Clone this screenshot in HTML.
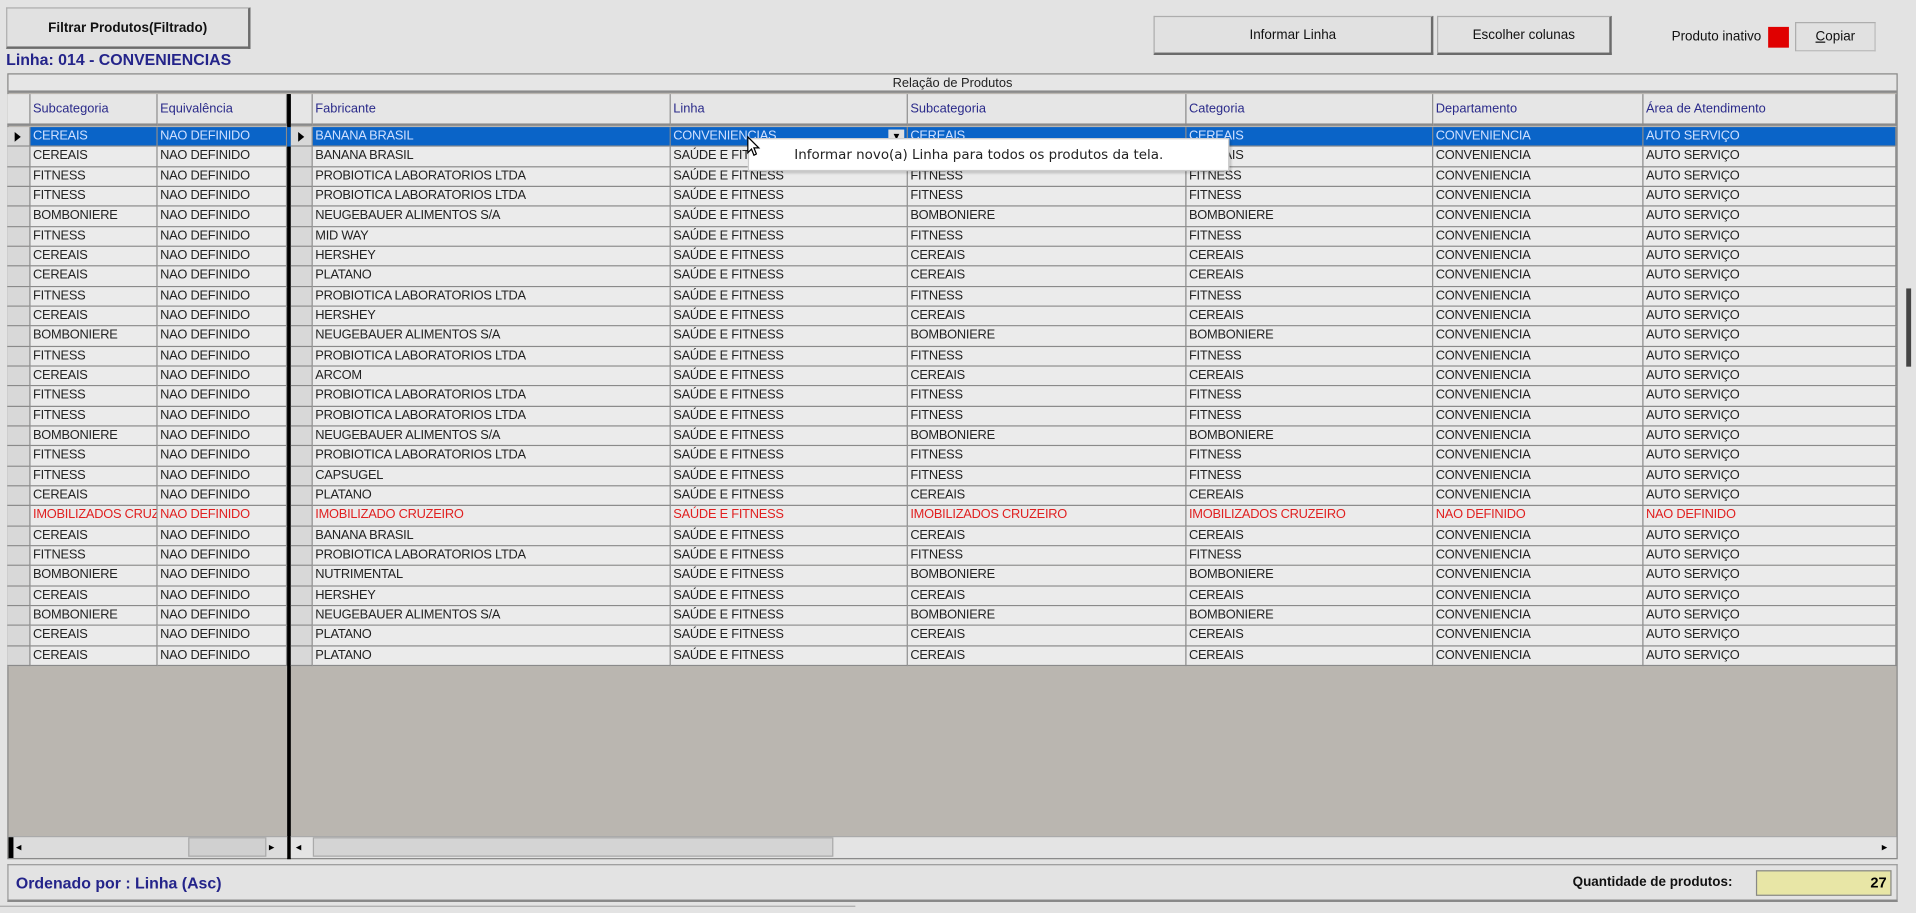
<!DOCTYPE html>
<html><head><meta charset="utf-8"><style>
*{box-sizing:border-box;margin:0;padding:0}
html,body{width:1916px;height:913px;overflow:hidden;background:#e3e3e3}
#w{position:absolute;left:0;top:0;width:1568px;height:747px;transform:scale(1.22194,1.2222);transform-origin:0 0;font-family:"Liberation Sans",Arial,sans-serif;background:#e3e3e3}
.a{position:absolute}
.btn{position:absolute;background:#e1e1e1;border:1px solid #adadad;border-right:2px solid #6b6b6b;border-bottom:2px solid #6b6b6b;font-size:11px;display:flex;align-items:center;justify-content:center;color:#111}
.row{position:absolute;left:6px;height:16.33px;display:flex;font-size:10.5px;color:#222;letter-spacing:-0.2px}
.row div{height:16.33px;line-height:15px;border-right:1px solid #8a8a8a;border-bottom:1px solid #8a8a8a;background:#ebebeb;padding-left:2px;white-space:nowrap;overflow:hidden}
.row .i{width:19px;background:#d8d8d8;padding:0}
.row .i2{width:18px;background:#d8d8d8;padding:0}
.row .d{width:3px;background:#000;border:none;padding:0}
.c1{width:104px}.c2{width:106px}.c3{width:293px}.c4{width:194px}.c5{width:228px}.c6{width:202px}.c7{width:172px}.c8{width:207px}
.row.s div{background:#0a64c8;color:#cfe0ff}
.row.s .i,.row.s .i2{background:#d8d8d8;color:#000}
.row.r div{color:#e02020}
.hd{position:absolute;left:6px;top:77px;height:26px;display:flex;font-size:10.5px;color:#2a2a8a}
.hd div{height:26px;line-height:24px;border-right:1px solid #8a8a8a;border-bottom:2px solid #8a8a8a;background:#e6e6e6;padding-left:2px}
.hd .i{width:19px;padding:0}.hd .i2{width:18px;padding:0}.hd .d{width:3px;background:#000;border:none;padding:0}
.tri{display:inline-block;width:0;height:0;border-top:4px solid transparent;border-bottom:4px solid transparent;border-left:5px solid #000;margin:4px 0 0 6px}
</style></head><body><div id="w">
<div class="btn" style="left:5px;top:6px;width:200px;height:34px;font-weight:bold">Filtrar Produtos(Filtrado)</div>
<div class="a" style="left:5px;top:41px;font-size:13px;font-weight:bold;color:#24248a">Linha: 014 - CONVENIENCIAS</div>
<div class="btn" style="left:944px;top:13px;width:229px;height:32px">Informar Linha</div>
<div class="btn" style="left:1176px;top:13px;width:143px;height:32px">Escolher colunas</div>
<div class="a" style="left:1368px;top:24px;font-size:11px;color:#111">Produto inativo</div>
<div class="a" style="left:1447px;top:22px;width:17px;height:17px;background:#e00000"></div>
<div class="btn" style="left:1469px;top:18px;width:66px;height:24px;border-right:1px solid #bbb;border-bottom:1px solid #bbb"><u>C</u>opiar</div>
<div class="a" style="left:6px;top:60px;width:1547px;height:643px;background:#bab6b0;border:1px solid #8a8a8a"></div>
<div class="a" style="left:7px;top:61px;width:1545px;height:15px;background:#e6e6e6;border-bottom:2px solid #8a8a8a;font-size:10.5px;text-align:center;line-height:14px;color:#222">Relação de Produtos</div>
<div class="hd"><div class="i"></div><div class="c1">Subcategoria</div><div class="c2">Equivalência</div><div class="d"></div><div class="i2"></div><div class="c3">Fabricante</div><div class="c4">Linha</div><div class="c5">Subcategoria</div><div class="c6">Categoria</div><div class="c7">Departamento</div><div class="c8">Área de Atendimento</div></div>
<div class="a" style="left:235px;top:77px;width:3px;height:626px;background:#000"></div>
<div class="row s" style="top:104px"><div class="i"><span class="tri"></span></div><div class="c1">CEREAIS</div><div class="c2">NAO DEFINIDO</div><div class="d"></div><div class="i2"><span class="tri"></span></div><div class="c3">BANANA BRASIL</div><div class="c4" style="position:relative">CONVENIENCIAS<span style="position:absolute;right:2px;top:2px;width:13px;height:12px;background:#e0e0e0;color:#000;font-size:8px;text-align:center;line-height:12px">▼</span></div><div class="c5">CEREAIS</div><div class="c6">CEREAIS</div><div class="c7">CONVENIENCIA</div><div class="c8">AUTO SERVIÇO</div></div>
<div class="row" style="top:120.33px"><div class="i"></div><div class="c1">CEREAIS</div><div class="c2">NAO DEFINIDO</div><div class="d"></div><div class="i2"></div><div class="c3">BANANA BRASIL</div><div class="c4">SAÚDE E FITNESS</div><div class="c5">CEREAIS</div><div class="c6">CEREAIS</div><div class="c7">CONVENIENCIA</div><div class="c8">AUTO SERVIÇO</div></div>
<div class="row" style="top:136.67px"><div class="i"></div><div class="c1">FITNESS</div><div class="c2">NAO DEFINIDO</div><div class="d"></div><div class="i2"></div><div class="c3">PROBIOTICA LABORATORIOS LTDA</div><div class="c4">SAÚDE E FITNESS</div><div class="c5">FITNESS</div><div class="c6">FITNESS</div><div class="c7">CONVENIENCIA</div><div class="c8">AUTO SERVIÇO</div></div>
<div class="row" style="top:153px"><div class="i"></div><div class="c1">FITNESS</div><div class="c2">NAO DEFINIDO</div><div class="d"></div><div class="i2"></div><div class="c3">PROBIOTICA LABORATORIOS LTDA</div><div class="c4">SAÚDE E FITNESS</div><div class="c5">FITNESS</div><div class="c6">FITNESS</div><div class="c7">CONVENIENCIA</div><div class="c8">AUTO SERVIÇO</div></div>
<div class="row" style="top:169.33px"><div class="i"></div><div class="c1">BOMBONIERE</div><div class="c2">NAO DEFINIDO</div><div class="d"></div><div class="i2"></div><div class="c3">NEUGEBAUER ALIMENTOS S/A</div><div class="c4">SAÚDE E FITNESS</div><div class="c5">BOMBONIERE</div><div class="c6">BOMBONIERE</div><div class="c7">CONVENIENCIA</div><div class="c8">AUTO SERVIÇO</div></div>
<div class="row" style="top:185.67px"><div class="i"></div><div class="c1">FITNESS</div><div class="c2">NAO DEFINIDO</div><div class="d"></div><div class="i2"></div><div class="c3">MID WAY</div><div class="c4">SAÚDE E FITNESS</div><div class="c5">FITNESS</div><div class="c6">FITNESS</div><div class="c7">CONVENIENCIA</div><div class="c8">AUTO SERVIÇO</div></div>
<div class="row" style="top:202px"><div class="i"></div><div class="c1">CEREAIS</div><div class="c2">NAO DEFINIDO</div><div class="d"></div><div class="i2"></div><div class="c3">HERSHEY</div><div class="c4">SAÚDE E FITNESS</div><div class="c5">CEREAIS</div><div class="c6">CEREAIS</div><div class="c7">CONVENIENCIA</div><div class="c8">AUTO SERVIÇO</div></div>
<div class="row" style="top:218.33px"><div class="i"></div><div class="c1">CEREAIS</div><div class="c2">NAO DEFINIDO</div><div class="d"></div><div class="i2"></div><div class="c3">PLATANO</div><div class="c4">SAÚDE E FITNESS</div><div class="c5">CEREAIS</div><div class="c6">CEREAIS</div><div class="c7">CONVENIENCIA</div><div class="c8">AUTO SERVIÇO</div></div>
<div class="row" style="top:234.67px"><div class="i"></div><div class="c1">FITNESS</div><div class="c2">NAO DEFINIDO</div><div class="d"></div><div class="i2"></div><div class="c3">PROBIOTICA LABORATORIOS LTDA</div><div class="c4">SAÚDE E FITNESS</div><div class="c5">FITNESS</div><div class="c6">FITNESS</div><div class="c7">CONVENIENCIA</div><div class="c8">AUTO SERVIÇO</div></div>
<div class="row" style="top:251px"><div class="i"></div><div class="c1">CEREAIS</div><div class="c2">NAO DEFINIDO</div><div class="d"></div><div class="i2"></div><div class="c3">HERSHEY</div><div class="c4">SAÚDE E FITNESS</div><div class="c5">CEREAIS</div><div class="c6">CEREAIS</div><div class="c7">CONVENIENCIA</div><div class="c8">AUTO SERVIÇO</div></div>
<div class="row" style="top:267.33px"><div class="i"></div><div class="c1">BOMBONIERE</div><div class="c2">NAO DEFINIDO</div><div class="d"></div><div class="i2"></div><div class="c3">NEUGEBAUER ALIMENTOS S/A</div><div class="c4">SAÚDE E FITNESS</div><div class="c5">BOMBONIERE</div><div class="c6">BOMBONIERE</div><div class="c7">CONVENIENCIA</div><div class="c8">AUTO SERVIÇO</div></div>
<div class="row" style="top:283.67px"><div class="i"></div><div class="c1">FITNESS</div><div class="c2">NAO DEFINIDO</div><div class="d"></div><div class="i2"></div><div class="c3">PROBIOTICA LABORATORIOS LTDA</div><div class="c4">SAÚDE E FITNESS</div><div class="c5">FITNESS</div><div class="c6">FITNESS</div><div class="c7">CONVENIENCIA</div><div class="c8">AUTO SERVIÇO</div></div>
<div class="row" style="top:300px"><div class="i"></div><div class="c1">CEREAIS</div><div class="c2">NAO DEFINIDO</div><div class="d"></div><div class="i2"></div><div class="c3">ARCOM</div><div class="c4">SAÚDE E FITNESS</div><div class="c5">CEREAIS</div><div class="c6">CEREAIS</div><div class="c7">CONVENIENCIA</div><div class="c8">AUTO SERVIÇO</div></div>
<div class="row" style="top:316.33px"><div class="i"></div><div class="c1">FITNESS</div><div class="c2">NAO DEFINIDO</div><div class="d"></div><div class="i2"></div><div class="c3">PROBIOTICA LABORATORIOS LTDA</div><div class="c4">SAÚDE E FITNESS</div><div class="c5">FITNESS</div><div class="c6">FITNESS</div><div class="c7">CONVENIENCIA</div><div class="c8">AUTO SERVIÇO</div></div>
<div class="row" style="top:332.67px"><div class="i"></div><div class="c1">FITNESS</div><div class="c2">NAO DEFINIDO</div><div class="d"></div><div class="i2"></div><div class="c3">PROBIOTICA LABORATORIOS LTDA</div><div class="c4">SAÚDE E FITNESS</div><div class="c5">FITNESS</div><div class="c6">FITNESS</div><div class="c7">CONVENIENCIA</div><div class="c8">AUTO SERVIÇO</div></div>
<div class="row" style="top:349px"><div class="i"></div><div class="c1">BOMBONIERE</div><div class="c2">NAO DEFINIDO</div><div class="d"></div><div class="i2"></div><div class="c3">NEUGEBAUER ALIMENTOS S/A</div><div class="c4">SAÚDE E FITNESS</div><div class="c5">BOMBONIERE</div><div class="c6">BOMBONIERE</div><div class="c7">CONVENIENCIA</div><div class="c8">AUTO SERVIÇO</div></div>
<div class="row" style="top:365.33px"><div class="i"></div><div class="c1">FITNESS</div><div class="c2">NAO DEFINIDO</div><div class="d"></div><div class="i2"></div><div class="c3">PROBIOTICA LABORATORIOS LTDA</div><div class="c4">SAÚDE E FITNESS</div><div class="c5">FITNESS</div><div class="c6">FITNESS</div><div class="c7">CONVENIENCIA</div><div class="c8">AUTO SERVIÇO</div></div>
<div class="row" style="top:381.67px"><div class="i"></div><div class="c1">FITNESS</div><div class="c2">NAO DEFINIDO</div><div class="d"></div><div class="i2"></div><div class="c3">CAPSUGEL</div><div class="c4">SAÚDE E FITNESS</div><div class="c5">FITNESS</div><div class="c6">FITNESS</div><div class="c7">CONVENIENCIA</div><div class="c8">AUTO SERVIÇO</div></div>
<div class="row" style="top:398px"><div class="i"></div><div class="c1">CEREAIS</div><div class="c2">NAO DEFINIDO</div><div class="d"></div><div class="i2"></div><div class="c3">PLATANO</div><div class="c4">SAÚDE E FITNESS</div><div class="c5">CEREAIS</div><div class="c6">CEREAIS</div><div class="c7">CONVENIENCIA</div><div class="c8">AUTO SERVIÇO</div></div>
<div class="row r" style="top:414.33px"><div class="i"></div><div class="c1">IMOBILIZADOS CRUZEIRO</div><div class="c2">NAO DEFINIDO</div><div class="d"></div><div class="i2"></div><div class="c3">IMOBILIZADO CRUZEIRO</div><div class="c4">SAÚDE E FITNESS</div><div class="c5">IMOBILIZADOS CRUZEIRO</div><div class="c6">IMOBILIZADOS CRUZEIRO</div><div class="c7">NAO DEFINIDO</div><div class="c8">NAO DEFINIDO</div></div>
<div class="row" style="top:430.67px"><div class="i"></div><div class="c1">CEREAIS</div><div class="c2">NAO DEFINIDO</div><div class="d"></div><div class="i2"></div><div class="c3">BANANA BRASIL</div><div class="c4">SAÚDE E FITNESS</div><div class="c5">CEREAIS</div><div class="c6">CEREAIS</div><div class="c7">CONVENIENCIA</div><div class="c8">AUTO SERVIÇO</div></div>
<div class="row" style="top:447px"><div class="i"></div><div class="c1">FITNESS</div><div class="c2">NAO DEFINIDO</div><div class="d"></div><div class="i2"></div><div class="c3">PROBIOTICA LABORATORIOS LTDA</div><div class="c4">SAÚDE E FITNESS</div><div class="c5">FITNESS</div><div class="c6">FITNESS</div><div class="c7">CONVENIENCIA</div><div class="c8">AUTO SERVIÇO</div></div>
<div class="row" style="top:463.33px"><div class="i"></div><div class="c1">BOMBONIERE</div><div class="c2">NAO DEFINIDO</div><div class="d"></div><div class="i2"></div><div class="c3">NUTRIMENTAL</div><div class="c4">SAÚDE E FITNESS</div><div class="c5">BOMBONIERE</div><div class="c6">BOMBONIERE</div><div class="c7">CONVENIENCIA</div><div class="c8">AUTO SERVIÇO</div></div>
<div class="row" style="top:479.67px"><div class="i"></div><div class="c1">CEREAIS</div><div class="c2">NAO DEFINIDO</div><div class="d"></div><div class="i2"></div><div class="c3">HERSHEY</div><div class="c4">SAÚDE E FITNESS</div><div class="c5">CEREAIS</div><div class="c6">CEREAIS</div><div class="c7">CONVENIENCIA</div><div class="c8">AUTO SERVIÇO</div></div>
<div class="row" style="top:496px"><div class="i"></div><div class="c1">BOMBONIERE</div><div class="c2">NAO DEFINIDO</div><div class="d"></div><div class="i2"></div><div class="c3">NEUGEBAUER ALIMENTOS S/A</div><div class="c4">SAÚDE E FITNESS</div><div class="c5">BOMBONIERE</div><div class="c6">BOMBONIERE</div><div class="c7">CONVENIENCIA</div><div class="c8">AUTO SERVIÇO</div></div>
<div class="row" style="top:512.33px"><div class="i"></div><div class="c1">CEREAIS</div><div class="c2">NAO DEFINIDO</div><div class="d"></div><div class="i2"></div><div class="c3">PLATANO</div><div class="c4">SAÚDE E FITNESS</div><div class="c5">CEREAIS</div><div class="c6">CEREAIS</div><div class="c7">CONVENIENCIA</div><div class="c8">AUTO SERVIÇO</div></div>
<div class="row" style="top:528.67px"><div class="i"></div><div class="c1">CEREAIS</div><div class="c2">NAO DEFINIDO</div><div class="d"></div><div class="i2"></div><div class="c3">PLATANO</div><div class="c4">SAÚDE E FITNESS</div><div class="c5">CEREAIS</div><div class="c6">CEREAIS</div><div class="c7">CONVENIENCIA</div><div class="c8">AUTO SERVIÇO</div></div>
<!-- scrollbars -->
<div class="a" style="left:7px;top:684px;width:228px;height:18px;background:#dcdcdc;border-top:1px solid #aaa"></div>
<div class="a" style="left:7px;top:685px;width:4px;height:17px;background:#000"></div>
<div class="a" style="left:13px;top:688px;font-size:9px">◂</div>
<div class="a" style="left:154px;top:685px;width:64px;height:16px;background:#d0d0d0;border:1px solid #aaa"></div>
<div class="a" style="left:220px;top:688px;font-size:9px">▸</div>
<div class="a" style="left:238px;top:684px;width:1314px;height:18px;background:#e4e4e4;border-top:1px solid #aaa"></div>
<div class="a" style="left:242px;top:688px;font-size:9px">◂</div>
<div class="a" style="left:256px;top:685px;width:426px;height:16px;background:#d4d4d4;border:1px solid #aaa"></div>
<div class="a" style="left:1540px;top:688px;font-size:9px">▸</div>
<div class="a" style="left:1560px;top:236px;width:4px;height:64px;background:#444"></div>
<!-- status -->
<div class="a" style="left:6px;top:707px;width:1547px;height:31px;border:1px solid #999;border-bottom:2px solid #888;background:#e3e3e3"></div>
<div class="a" style="left:13px;top:715px;font-size:13px;font-weight:bold;color:#24248a">Ordenado por : Linha (Asc)</div>
<div class="a" style="left:1287px;top:716px;font-size:11px;font-weight:bold;color:#111">Quantidade de produtos:</div>
<div class="a" style="left:1437px;top:712px;width:111px;height:21px;background:#e8e6a6;border:1px solid #888;font-size:12px;font-weight:bold;text-align:right;padding-right:3px;line-height:19px">27</div>
<div class="a" style="left:0;top:741px;width:700px;height:6px;border-top:1px solid #aaa"></div>
<!-- tooltip -->
<div class="a" style="left:612px;top:113px;width:394px;height:27px;background:#fff;border:1px solid #ccc;box-shadow:2px 2px 2px rgba(0,0,0,.2);font-size:12px;color:#222;padding:6px 0 0 37px;font-family:'DejaVu Sans','Liberation Sans',sans-serif;font-size:11px">Informar novo(a) Linha para todos os produtos da tela.</div>
<svg class="a" style="left:611px;top:111px" width="12" height="18" viewBox="0 0 12 18"><path d="M1 1 L1 14 L4 11 L6 16 L8 15 L6 10 L10 10 Z" fill="#fff" stroke="#000" stroke-width="1"/></svg>
</div></body></html>
